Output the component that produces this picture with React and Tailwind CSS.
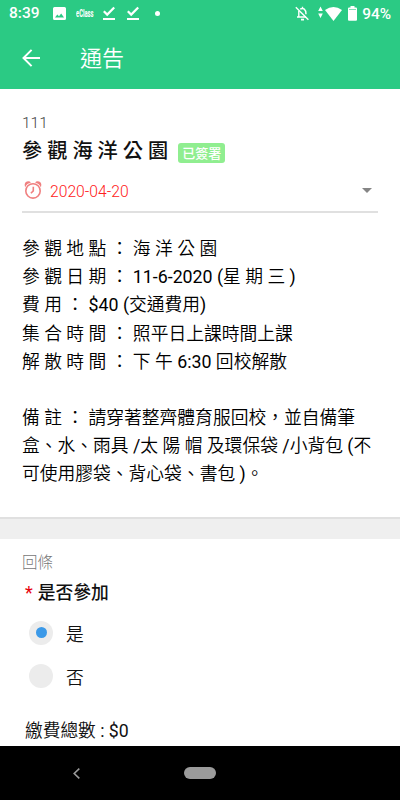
const notice = [
  '參 觀 地 點 ： 海 洋 公 園',
  '參 觀 日 期 ： 11-6-2020 (星 期 三 )',
  '費 用 ： $40 (交通費用)',
  '集 合 時 間 ： 照平日上課時間上課',
  '解 散 時 間 ： 下 午 6:30 回校解散',
  '',
  '備 註 ： 請穿著整齊體育服回校，並自備筆',
  '盒、水、雨具 /太 陽 帽 及環保袋 /小背包 (不',
  '可使用膠袋、背心袋、書包 )。',
]

function DownloadDone() {
  return (
    <svg width="12" height="15" viewBox="0 0 12 15" fill="none" stroke="white">
      <path d="M0.8 5.2 L4.2 8.6 L11.2 1.4" strokeWidth="2.2" />
      <path d="M0 13 H12" strokeWidth="2" />
    </svg>
  )
}

function StatusBar() {
  return (
    <div className="flex h-[27px] items-center pr-[9px] pl-[9px] text-[16px] leading-none font-medium text-white">
      <span className="mt-px w-[44px] text-[15.5px]">8:39</span>
      <svg width="13" height="13" viewBox="0 0 13 13">
        <path
          fillRule="evenodd"
          fill="white"
          d="M1.5 0 H11.5 Q13 0 13 1.5 V11.5 Q13 13 11.5 13 H1.5 Q0 13 0 11.5 V1.5 Q0 0 1.5 0 Z M2 10.5 H11 L8.2 6.5 L6 9.3 L4.3 7.4 Z"
        />
      </svg>
      <span className="mb-[3px] ml-[10px] w-[27px]">
        <span className="inline-block origin-left scale-x-[0.58] text-[10px] font-bold">eClass</span>
      </span>
      <DownloadDone />
      <span className="w-3" />
      <DownloadDone />
      <span className="ml-4 size-[5px] rounded-full bg-white" />
      <div className="ml-auto flex items-center">
        <svg width="15" height="15" viewBox="0 0 15 15" fill="none" stroke="white" strokeWidth="1.4">
          <path d="M3.8 5 V10.8 M2 11 H11 M5.2 3.2 Q7.3 1.8 9.3 3.1 Q11 4.4 11 8.2 M7.5 0.8 V2.5" />
          <path d="M6 13.6 H9" strokeWidth="1.8" />
          <path d="M0.8 1.2 L13.4 13.8" />
        </svg>
        <svg width="5" height="13" viewBox="0 0 5 13" fill="white" className="mb-[2px] ml-[8px]">
          <path d="M2.5 0.5 L4.8 5 H0.2 Z M0.2 7.5 H4.8 L2.5 12 Z" />
        </svg>
        <svg width="17" height="14" viewBox="0 0 17 14" fill="white" className="mr-[6px] ml-[2px]">
          <path d="M0 3.1 Q8.5 -3 17 3.1 L8.5 14 Z" />
        </svg>
        <svg width="9" height="15" viewBox="0 0 9 15" fill="white">
          <path d="M2.5 0 H6.5 V1.5 H8 Q9 1.5 9 2.5 V13.8 Q9 14.8 8 14.8 H1 Q0 14.8 0 13.8 V2.5 Q0 1.5 1 1.5 H2.5 Z" />
          <path d="M1 3.5 H8" stroke="#2bca84" strokeWidth="0.6" />
        </svg>
        <span className="mt-[2px] ml-[5px] text-[15.4px]">94%</span>
      </div>
    </div>
  )
}

function Option({ label, checked }) {
  return (
    <div className="flex h-[43px] items-center pl-[29px]">
      <span className="flex size-6 items-center justify-center rounded-full bg-[#ececec]">
        {checked && <span className="size-[11px] rounded-full bg-[#3b99e8]" />}
      </span>
      <span className="mt-[5px] ml-[13px] text-[17.8px] font-[350]">{label}</span>
    </div>
  )
}

export default function App() {
  return (
    <div className="flex h-[800px] w-[400px] flex-col overflow-hidden bg-white font-[Roboto,'Noto_Sans_CJK_TC',sans-serif] text-[#111]">
      <header className="h-[89px] shrink-0 bg-[#2bca84]">
        <StatusBar />
        <div className="flex h-[62px] items-center pl-[22px] text-white">
          <svg width="18" height="18" viewBox="0 0 18 18" fill="none" stroke="white" strokeWidth="2">
            <path d="M18 9 H1.6 M9.6 0.9 L1.5 9 L9.6 17.1" />
          </svg>
          <h1 className="mt-px ml-[40px] text-[22px] leading-none font-[350]">通告</h1>
        </div>
      </header>

      <section className="h-[430px] shrink-0 border-b-2 border-[#e0e0e0] px-[22px] pt-[24px]">
        <div className="text-[15.5px] leading-[20px] font-light text-[#444]">111</div>
        <div className="flex h-[36px] items-center">
          <h2 className="mt-px text-[20.2px] font-medium whitespace-nowrap">參 觀 海 洋 公 園</h2>
          <span className="mt-[4px] ml-[10px] flex h-5 items-center rounded-[3px] bg-[#90ee90] px-[4px] text-[13px] leading-none font-medium text-white">
            已簽署
          </span>
        </div>
        <div className="flex h-[44px] items-center border-b-2 border-[#e0e0e0] pr-[6px] pl-[2px]">
          <svg width="18" height="18" viewBox="0 0 18 18" fill="none" stroke="#f08080" strokeWidth="1.6">
            <circle cx="9" cy="9.9" r="7.2" />
            <path d="M9.3 5.8 V9.9 L6.9 12.3" />
            <path d="M0.8 5.3 Q0 0.8 4 0.3 Q6 0.2 6.9 1.6 Q2.8 2.6 1.5 5.9 Z M17.2 5.3 Q18 0.8 14 0.3 Q12 0.2 11.1 1.6 Q15.2 2.6 16.5 5.9 Z" fill="#f08080" stroke="none" />
          </svg>
          <span className="mt-[3px] ml-[8px] text-[15.7px] font-[350] text-[#ff2020]">2020-04-20</span>
          <svg width="10" height="5" viewBox="0 0 10 5" className="ml-auto">
            <path d="M0 0 H10 L5 5 Z" fill="#858585" />
          </svg>
        </div>
        <div className="pt-[22.2px] font-[Roboto,'Noto_Sans_CJK_TC_DemiLight','Noto_Sans_CJK_TC',sans-serif] text-[17.77px] leading-[28.15px] font-normal whitespace-nowrap text-black">
          {notice.map((line, i) => (
            <p key={i} className="h-[28.15px]">{line}</p>
          ))}
        </div>
      </section>

      <div className="h-[20px] shrink-0 bg-[#efefef]" />

      <section className="h-[207px] shrink-0 pt-[13px]">
        <div className="pl-[22px] text-[15.5px] leading-[22px] font-light text-[#777]">回條</div>
        <h3 className="flex h-[37px] items-center pl-[25px] text-[17.8px] font-medium">
          <span className="mr-[5px] text-[18px] font-normal text-red-600">*</span>
          <span className="mt-px">是否參加</span>
        </h3>
        <Option label="是" checked />
        <Option label="否" />
        <div className="pt-[20px] pl-[25px] font-[Roboto,'Noto_Sans_CJK_TC_DemiLight','Noto_Sans_CJK_TC',sans-serif] text-[17.7px] leading-[28px] font-normal">
          繳費總數 : $0
        </div>
      </section>

      <nav className="flex h-[54px] shrink-0 items-center bg-black pl-[73px]">
        <svg width="7" height="11" viewBox="0 0 7 11" fill="none" stroke="#999" strokeWidth="1.6">
          <path d="M6.3 0.6 L1.2 5.5 L6.3 10.4" />
        </svg>
        <span className="ml-[104px] h-[12px] w-[32px] rounded-full bg-[#9b9b9b]" />
      </nav>
    </div>
  )
}
